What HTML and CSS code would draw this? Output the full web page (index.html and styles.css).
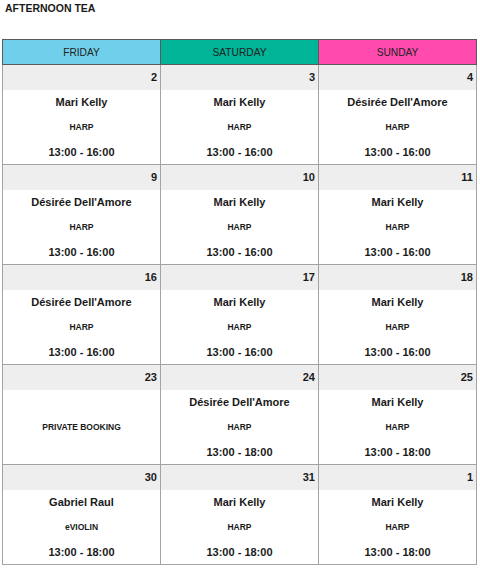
FILE: index.html
```html
<!DOCTYPE html>
<html>
<head>
<meta charset="utf-8">
<link rel="stylesheet" href="styles.css">
</head>
<body>
<h1 class="title">AFTERNOON TEA</h1>
<table class="cal">
  <thead>
    <tr>
      <th class="fri">FRIDAY</th>
      <th class="sat">SATURDAY</th>
      <th class="sun">SUNDAY</th>
    </tr>
  </thead>
  <tbody>
    <tr>
      <td><div class="date">2</div><div class="info"><div class="name">Mari Kelly</div><div class="inst">HARP</div><div class="time">13:00 - 16:00</div></div></td>
      <td><div class="date">3</div><div class="info"><div class="name">Mari Kelly</div><div class="inst">HARP</div><div class="time">13:00 - 16:00</div></div></td>
      <td><div class="date">4</div><div class="info"><div class="name">Désirée Dell'Amore</div><div class="inst">HARP</div><div class="time">13:00 - 16:00</div></div></td>
    </tr>
    <tr>
      <td><div class="date">9</div><div class="info"><div class="name">Désirée Dell'Amore</div><div class="inst">HARP</div><div class="time">13:00 - 16:00</div></div></td>
      <td><div class="date">10</div><div class="info"><div class="name">Mari Kelly</div><div class="inst">HARP</div><div class="time">13:00 - 16:00</div></div></td>
      <td><div class="date">11</div><div class="info"><div class="name">Mari Kelly</div><div class="inst">HARP</div><div class="time">13:00 - 16:00</div></div></td>
    </tr>
    <tr>
      <td><div class="date">16</div><div class="info"><div class="name">Désirée Dell'Amore</div><div class="inst">HARP</div><div class="time">13:00 - 16:00</div></div></td>
      <td><div class="date">17</div><div class="info"><div class="name">Mari Kelly</div><div class="inst">HARP</div><div class="time">13:00 - 16:00</div></div></td>
      <td><div class="date">18</div><div class="info"><div class="name">Mari Kelly</div><div class="inst">HARP</div><div class="time">13:00 - 16:00</div></div></td>
    </tr>
    <tr>
      <td><div class="date">23</div><div class="info private"><div class="inst">PRIVATE BOOKING</div></div></td>
      <td><div class="date">24</div><div class="info"><div class="name">Désirée Dell'Amore</div><div class="inst">HARP</div><div class="time">13:00 - 18:00</div></div></td>
      <td><div class="date">25</div><div class="info"><div class="name">Mari Kelly</div><div class="inst">HARP</div><div class="time">13:00 - 18:00</div></div></td>
    </tr>
    <tr>
      <td><div class="date">30</div><div class="info"><div class="name">Gabriel Raul</div><div class="inst">eVIOLIN</div><div class="time">13:00 - 18:00</div></div></td>
      <td><div class="date">31</div><div class="info"><div class="name">Mari Kelly</div><div class="inst">HARP</div><div class="time">13:00 - 18:00</div></div></td>
      <td><div class="date">1</div><div class="info"><div class="name">Mari Kelly</div><div class="inst">HARP</div><div class="time">13:00 - 18:00</div></div></td>
    </tr>
  </tbody>
</table>
</body>
</html>
```
FILE: styles.css
```css
html, body {
  margin: 0;
  padding: 0;
  background: #ffffff;
}
body {
  font-family: "Liberation Sans", Arial, sans-serif;
  color: #1a1a1a;
}
.title {
  margin: 0;
  padding: 2px 0 0 5px;
  height: 39px;
  box-sizing: border-box;
  font-size: 10.5px;
  line-height: 13px;
  font-weight: bold;
}
.cal {
  margin-left: 2px;
  border-collapse: collapse;
  table-layout: fixed;
  width: 475px;
}
.cal th {
  height: 24px;
  padding: 0;
  font-size: 10.2px;
  font-weight: normal;
  color: #222;
  text-align: center;
  border: 1px solid #5a5a5a;
}
.cal th.fri { background: #70d0eb; }
.cal th.sat { background: #00b497; }
.cal th.sun { background: #ff4aae; }
.cal td {
  padding: 0;
  border: 1px solid #a3a3a3;
  vertical-align: top;
}
.date {
  height: 25px;
  line-height: 25px;
  background: #eeeeee;
  text-align: right;
  padding-right: 3px;
  font-size: 11px;
  font-weight: bold;
}
.info {
  height: 74px;
  display: flex;
  flex-direction: column;
  text-align: center;
  font-weight: bold;
}
.info > div {
  height: 25px;
  line-height: 25px;
}
.name, .time {
  font-size: 11px;
}
.inst {
  font-size: 8.5px;
}
.info.private {
  justify-content: center;
}
```
